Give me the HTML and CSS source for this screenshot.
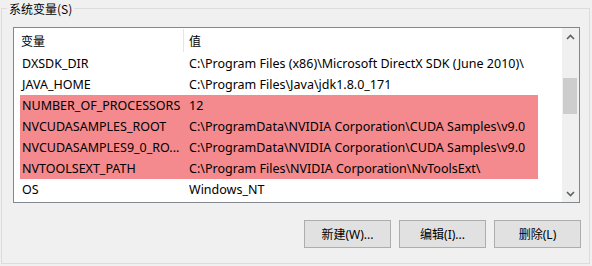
FILE: index.html
```html
<!DOCTYPE html>
<html lang="zh-CN">
<head>
    <meta charset="UTF-8">
    <title>系统变量</title>
    <link rel="stylesheet" href="styles.css">
</head>
<body>
<fieldset class="group">
    <legend>系统变量(S)</legend>

    <div class="list">
        <div class="list-body">
            <div class="list-head">
                <div class="head-name">变量</div>
                <div class="head-sep"></div>
                <div class="head-value">值</div>
            </div>
            <div class="rows">
                <div class="row"><span class="name">DXSDK_DIR</span><span class="value">C:\Program Files (x86)\Microsoft DirectX SDK (June 2010)\</span></div>
                <div class="row"><span class="name">JAVA_HOME</span><span class="value">C:\Program Files\Java\jdk1.8.0_171</span></div>
                <div class="row selected"><span class="name">NUMBER_OF_PROCESSORS</span><span class="value">12</span></div>
                <div class="row selected"><span class="name">NVCUDASAMPLES_ROOT</span><span class="value">C:\ProgramData\NVIDIA Corporation\CUDA Samples\v9.0</span></div>
                <div class="row selected"><span class="name">NVCUDASAMPLES9_0_RO...</span><span class="value">C:\ProgramData\NVIDIA Corporation\CUDA Samples\v9.0</span></div>
                <div class="row selected"><span class="name">NVTOOLSEXT_PATH</span><span class="value">C:\Program Files\NVIDIA Corporation\NvToolsExt\</span></div>
                <div class="row"><span class="name">OS</span><span class="value">Windows_NT</span></div>
            </div>
        </div>
        <div class="scrollbar">
            <div class="arrow">
                <svg width="9" height="6" viewBox="0 0 9 6"><polyline points="1,5 4.5,1.5 8,5" fill="none" stroke="#606060" stroke-width="1.6"/></svg>
            </div>
            <div class="track">
                <div class="thumb"></div>
            </div>
            <div class="arrow">
                <svg width="9" height="6" viewBox="0 0 9 6"><polyline points="1,1 4.5,4.5 8,1" fill="none" stroke="#606060" stroke-width="1.6"/></svg>
            </div>
        </div>
    </div>

    <div class="buttons">
        <button type="button">新建(W)...</button>
        <button type="button">编辑(I)...</button>
        <button type="button">删除(L)</button>
    </div>
</fieldset>
</body>
</html>
```

FILE: styles.css
```css
body{
    margin: 0;
    background-color: #f0f0f0;
    font-family: "Noto Sans", "Noto Sans CJK SC", sans-serif;
    font-size: 12.5px;
    color: #000;
}
.group{
    box-sizing: border-box;
    width: 589px;
    height: 264px;
    margin: 0 0 0 1px;
    padding: 0;
    border: 1px solid #dcdcdc;
}
.group legend{
    margin-left: 5px;
    padding: 0 2px;
    line-height: 17px;
    font-size: 12px;
    font-family: "Noto Sans CJK SC", sans-serif;
}
.list{
    display: flex;
    height: 176px;
    box-sizing: border-box;
    margin: 10px 9px 0 11px;
    border: 1px solid #828790;
    background-color: #fff;
}
.list-body{
    flex: 1;
    overflow: hidden;
}
.list-head{
    display: flex;
    height: 25px;
    align-items: center;
}
.head-name{
    width: 162px;
    padding-left: 7px;
}
.head-sep{
    align-self: stretch;
    width: 1px;
    margin: 1px 0;
    background-color: #e5e5e5;
}
.head-value{
    padding-left: 5px;
}
.list-head div{
    font-size: 12px;
    font-family: "Noto Sans CJK SC", sans-serif;
}
.rows{
    margin-left: 6px;
    width: 518px;
}
.row{
    display: flex;
    height: 21px;
    align-items: center;
    white-space: nowrap;
}
.row.selected{
    background-color: #f48a8d;
}
.name{
    width: 167px;
    padding-left: 2px;
    overflow: hidden;
}
.value{
    flex: 1;
    overflow: hidden;
}
.scrollbar{
    display: flex;
    flex-direction: column;
    width: 17px;
    background-color: #f0f0f0;
}
.arrow{
    height: 17px;
    display: flex;
    align-items: center;
    justify-content: center;
}
.arrow svg{
    display: block;
}
.track{
    flex: 1;
    padding-top: 33px;
}
.thumb{
    width: 14px;
    height: 36px;
    margin-left: 1px;
    background-color: #cdcdcd;
}
.buttons{
    display: flex;
    justify-content: flex-end;
    gap: 8px;
    margin: 17px 8px 0 0;
}
.buttons button{
    width: 87px;
    height: 28px;
    padding: 0;
    border: 1px solid #adadad;
    background-color: #e1e1e1;
    font-family: "Noto Sans", "Noto Sans CJK SC", sans-serif;
    font-size: 12px;
    color: #000;
}
```
